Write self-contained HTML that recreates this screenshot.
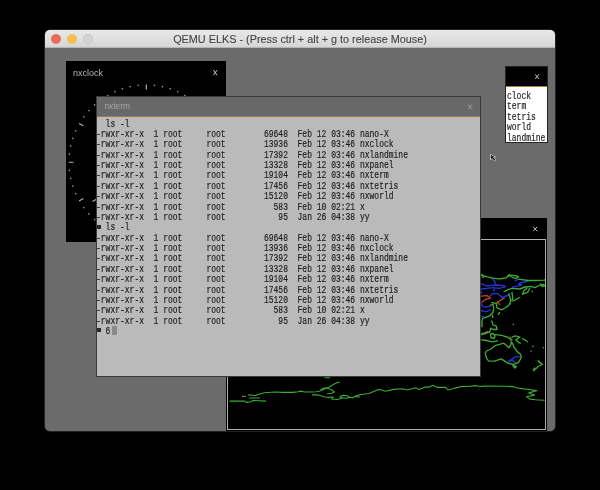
<!DOCTYPE html>
<html><head><meta charset="utf-8">
<style>
*{margin:0;padding:0;box-sizing:border-box}
html,body{will-change:transform;width:600px;height:490px;background:#000;overflow:hidden;position:relative;font-family:"Liberation Sans",sans-serif}
.abs{position:absolute}
#win{left:45px;top:30px;width:510px;height:401px;border-radius:5px;overflow:hidden;background:#6b6b6b;box-shadow:0 0 0 0.5px rgba(140,140,140,.5)}
#tb{left:0;top:0;width:510px;height:18px;background:linear-gradient(#e9e9e9,#d6d6d6);border-bottom:1px solid #b5b5b5}
#title{left:0;top:2.5px;width:510px;text-align:center;font-size:10.85px;color:#444;-webkit-text-stroke:0.1px #444;white-space:nowrap}
.dot{top:4px;width:10px;height:10px;border-radius:50%}
#clock{left:66px;top:61px;width:160px;height:181px;background:#000}
.ttl{font-size:9px;color:#c8c8c8;white-space:nowrap}
#term{left:96px;top:96px;width:385px;height:281px;background:#bababa;border:1px solid #3a3a3a;overflow:hidden}
#termtb{left:0;top:0;width:383px;height:20px;background:#686868;border-bottom:1px solid #a87a4a}
#txt{left:-1px;top:21.5px;font-family:"Liberation Mono",monospace;font-size:10.8px;line-height:10.38px;color:#1e1e1e;-webkit-text-stroke:0.2px #1e1e1e;white-space:pre;transform-origin:0 0;transform:scaleX(0.7407)}
#launch{left:505px;top:66px;width:43px;height:77px;background:#fff;border:1px solid #222}
#launchtb{left:0;top:0;width:41px;height:20px;background:#000;border-bottom:1px solid #a87a4a}
#ltxt{left:1px;top:24px;font-family:"Liberation Mono",monospace;font-size:10.8px;line-height:10.4px;color:#1e1e1e;-webkit-text-stroke:0.2px #1e1e1e;white-space:pre;transform-origin:0 0;transform:scaleX(0.7407)}
#map{left:226px;top:218px;width:321px;height:213px;background:#000}
#mapframe{left:227px;top:239px;width:319px;height:191px;border:1px solid #b0b0b0}
</style></head><body>
<div id="win" class="abs">
  <div id="tb" class="abs">
    <div class="abs dot" style="left:6px;background:#ed6a5e"></div>
    <div class="abs dot" style="left:22px;background:#f4bf4f"></div>
    <div class="abs dot" style="left:38px;background:#d2d2d2;box-shadow:inset 0 0 0 0.5px #c4c4c4"></div>
    <div id="title" class="abs">QEMU ELKS - (Press ctrl + alt + g to release Mouse)</div>
  </div>
</div>
<div id="clock" class="abs"></div>
<div class="abs ttl" style="left:73px;top:67.5px;color:#b4b4b4">nxclock</div>
<svg class="abs" style="left:0;top:0" width="600" height="490" viewBox="0 0 600 490"><path d="M213.3 70L217.1 75.3M217.1 70L213.3 75.3" stroke="#d0d0d0" stroke-width="0.9" fill="none"/><path d="M146.3 89.4L146.3 84.6M182.7 99.2L185.1 95.0M209.3 125.8L213.5 123.4M219.1 162.2L223.9 162.2M209.3 198.6L213.5 201.0M182.7 225.2L185.1 229.4M146.3 235.0L146.3 239.8M109.9 225.2L107.5 229.4M83.3 198.6L79.1 201.0M73.5 162.2L68.7 162.2M83.3 125.8L79.1 123.4M109.9 99.2L107.5 95.0" stroke="#b4b4b4" stroke-width="1.15" fill="none"/><g fill="#8c8c8c"><circle cx="154.4" cy="85.3" r="0.85"/><circle cx="162.4" cy="86.6" r="0.85"/><circle cx="170.2" cy="88.7" r="0.85"/><circle cx="177.7" cy="91.6" r="0.85"/><circle cx="191.7" cy="99.7" r="0.85"/><circle cx="198.0" cy="104.8" r="0.85"/><circle cx="203.7" cy="110.5" r="0.85"/><circle cx="208.8" cy="116.8" r="0.85"/><circle cx="216.9" cy="130.8" r="0.85"/><circle cx="219.8" cy="138.3" r="0.85"/><circle cx="221.9" cy="146.1" r="0.85"/><circle cx="223.2" cy="154.1" r="0.85"/><circle cx="223.2" cy="170.3" r="0.85"/><circle cx="221.9" cy="178.3" r="0.85"/><circle cx="219.8" cy="186.1" r="0.85"/><circle cx="216.9" cy="193.6" r="0.85"/><circle cx="208.8" cy="207.6" r="0.85"/><circle cx="203.7" cy="213.9" r="0.85"/><circle cx="198.0" cy="219.6" r="0.85"/><circle cx="191.7" cy="224.7" r="0.85"/><circle cx="177.7" cy="232.8" r="0.85"/><circle cx="170.2" cy="235.7" r="0.85"/><circle cx="162.4" cy="237.8" r="0.85"/><circle cx="154.4" cy="239.1" r="0.85"/><circle cx="138.2" cy="239.1" r="0.85"/><circle cx="130.2" cy="237.8" r="0.85"/><circle cx="122.4" cy="235.7" r="0.85"/><circle cx="114.9" cy="232.8" r="0.85"/><circle cx="100.9" cy="224.7" r="0.85"/><circle cx="94.6" cy="219.6" r="0.85"/><circle cx="88.9" cy="213.9" r="0.85"/><circle cx="83.8" cy="207.6" r="0.85"/><circle cx="75.7" cy="193.6" r="0.85"/><circle cx="72.8" cy="186.1" r="0.85"/><circle cx="70.7" cy="178.3" r="0.85"/><circle cx="69.4" cy="170.3" r="0.85"/><circle cx="69.4" cy="154.1" r="0.85"/><circle cx="70.7" cy="146.1" r="0.85"/><circle cx="72.8" cy="138.3" r="0.85"/><circle cx="75.7" cy="130.8" r="0.85"/><circle cx="83.8" cy="116.8" r="0.85"/><circle cx="88.9" cy="110.5" r="0.85"/><circle cx="94.6" cy="104.8" r="0.85"/><circle cx="100.9" cy="99.7" r="0.85"/><circle cx="114.9" cy="91.6" r="0.85"/><circle cx="122.4" cy="88.7" r="0.85"/><circle cx="130.2" cy="86.6" r="0.85"/><circle cx="138.2" cy="85.3" r="0.85"/></g><path d="M92.6 201.5L96.4 199.2" stroke="#b4b4b4" stroke-width="1.1"/></svg>
<div id="map" class="abs"></div>
<div id="mapframe" class="abs"></div>
<svg class="abs" style="left:0;top:0" width="600" height="490" viewBox="0 0 600 490"><path d="M533.2 226.8L537.2 231.2M537.2 226.8L533.2 231.2" stroke="#d0d0d0" stroke-width="0.9" fill="none"/></svg>
<svg class="abs" style="left:0;top:0" width="600" height="490" viewBox="0 0 600 490"><defs><clipPath id="mc"><rect x="228" y="240" width="317" height="189"/></clipPath></defs><g clip-path="url(#mc)" fill="none" stroke-linejoin="round" stroke-linecap="round"><polyline points="481.3,296.2 487.2,295.5 490.5,298.1 485.2,299.5 482,302.1" stroke="#b83e2c" stroke-width="1.35"/><polyline points="504.2,298.1 499.6,300.8 497,302.7" stroke="#b83e2c" stroke-width="1.35"/><polyline points="484.6,334 487.8,332.7" stroke="#b83e2c" stroke-width="1.35"/><polyline points="510,337.2 510.7,340.5" stroke="#b83e2c" stroke-width="1.35"/><polyline points="497.6,302 499.6,304.6" stroke="#b83e2c" stroke-width="1.35"/><polyline points="485.2,332.7 487.8,331.4" stroke="#b83e2c" stroke-width="1.35"/><polyline points="491.8,277.9 495,281.8 495,285" stroke="#2236d4" stroke-width="1.35"/><polyline points="481.3,283.8 485.9,285.7 489.8,285.7 496.3,285 504.2,285.7 505.5,286.7 499.6,288.3 493,287.7 486.5,288.3 481.3,289" stroke="#2236d4" stroke-width="1.35"/><polyline points="494.4,289 493.7,291" stroke="#2236d4" stroke-width="1.35"/><polyline points="481.3,291.6 482,292.9" stroke="#2236d4" stroke-width="1.35"/><polyline points="489.8,296.2 493,293.6 497.6,293.6 502.2,297.5 507.5,295.5 510,293.6" stroke="#2236d4" stroke-width="1.35"/><polyline points="515.3,280.5 518.5,279.2" stroke="#2236d4" stroke-width="1.35"/><polyline points="527,281.5 520.5,282.8 518.5,283.8 521.8,284.7 516.6,286.4 512.7,287" stroke="#2236d4" stroke-width="1.35"/><polyline points="481.3,303.3 482.6,306.6 486.5,307.2 490.5,305.9" stroke="#2236d4" stroke-width="1.35"/><polyline points="481.3,310.5 485.9,311.8 490.5,309.8" stroke="#2236d4" stroke-width="1.35"/><polyline points="481.3,316.4 485.9,317.4" stroke="#2236d4" stroke-width="1.35"/><polyline points="508.8,360.8 512,359.5 514.6,356.8 519.8,356.8" stroke="#2236d4" stroke-width="1.35"/><polyline points="508.3,362.3 511.7,360 516.3,363.4" stroke="#2236d4" stroke-width="1.35"/><polyline points="481.3,275.3 486.5,276.6 491.8,277.9 498.3,278.9 502.2,278.5 506.1,277.9 508.1,275.9 512,275.3 515.3,275.6 518.5,276.6 516,278.3 512.5,277.6" stroke="#3caa34" stroke-width="1.35"/><polyline points="482,274.5 484.5,276.5 482.5,277.5" stroke="#3caa34" stroke-width="1.35"/><polyline points="508,276.5 509.5,274.3 511,277" stroke="#3caa34" stroke-width="1.35"/><polyline points="518.5,279.2 528.3,280.5 535.5,280.5 544,280.2 545,280" stroke="#3caa34" stroke-width="1.35"/><polyline points="504.2,291.6 508.1,289.6 512,288.3 519.8,289 525,287 531,286.4 534.9,287.7 540.1,285 543.4,284.4 545,285.8 542,286.5 540.5,284" stroke="#3caa34" stroke-width="1.35"/><polyline points="529.6,288.3 527.7,292.3 522.5,294.2 523.8,291 527,288" stroke="#3caa34" stroke-width="1.35"/><polyline points="508.8,294.2 510.7,299.5 510,304" stroke="#3caa34" stroke-width="1.35"/><polyline points="512,292.3 512.7,298.1 512,300.8" stroke="#3caa34" stroke-width="1.35"/><polyline points="513.3,300.8 519.8,297.5" stroke="#3caa34" stroke-width="1.35"/><polyline points="496.3,303.3 497,307.9 501.6,309.8 505,308 508.1,305.9 510,303.3" stroke="#3caa34" stroke-width="1.35"/><polyline points="499.6,312.5 498.3,314.4" stroke="#3caa34" stroke-width="1.35"/><polyline points="491.8,302.7 496.3,303.4" stroke="#3caa34" stroke-width="1.35"/><polyline points="490.5,305.3 493,304 493.7,308.5 493,312.5 489.8,315.7 485.9,317.4 482.6,318.3 482,321.6 482,326.8" stroke="#3caa34" stroke-width="1.35"/><polyline points="492.4,315.1 492.7,317.7" stroke="#3caa34" stroke-width="1.35"/><polyline points="491.8,321 493,324.9 496.3,326.2 497,329.5 493,329.5 490.5,328.1 489.8,332 486.5,332.7 482,333.4" stroke="#3caa34" stroke-width="1.35"/><polyline points="481.3,334.6 485.2,333.3" stroke="#3caa34" stroke-width="1.35"/><polyline points="490.5,334 493,333.5 495,336 494,338.5 491,337.5 490.5,334" stroke="#3caa34" stroke-width="1.35"/><polyline points="495,334.6 501.6,335.3 507.5,337.2 512,339.8" stroke="#3caa34" stroke-width="1.35"/><polyline points="512,337.2 515.3,335.9 519.8,337.2 515.9,339.8 518.5,342.5 520.5,343.1" stroke="#3caa34" stroke-width="1.35"/><polyline points="522.5,338.5 527.7,341.8" stroke="#3caa34" stroke-width="1.35"/><polyline points="481.3,339.8 486.5,340.5 491.8,341.8 497.6,340.8" stroke="#3caa34" stroke-width="1.35"/><polyline points="510.7,345 508.8,347.7 506.1,345 503.5,343.1 499.6,344.4 495,345.7 491.1,349 486.5,351 485.2,353.6 486.5,358.1 488.5,360.8 494.7,361.1 500.9,358.8 504.9,361.1 508.3,363.4 514,364.5 518.5,362.3 520.5,359 521.2,356.8 520.5,354.2 517.2,351.6 514,347 512.7,343.8 511.4,341.8 510.7,345" stroke="#3caa34" stroke-width="1.35"/><polyline points="512.9,365.7 516.3,366.5 515,368 512.9,365.7" stroke="#3caa34" stroke-width="1.35"/><polyline points="538.1,360.8 540.8,363.4" stroke="#3caa34" stroke-width="1.35"/><polyline points="539,361.7 542.4,364.5 538,366.5 536.7,367.9 533.3,370.8 534.5,368" stroke="#3caa34" stroke-width="1.35"/><polyline points="229.9,401.1 244.3,401.1 246.8,402.4 250.5,401.75 253,400.5 265.5,401.1" stroke="#3caa34" stroke-width="1.1"/><polyline points="242.4,396.1 245.5,396.5" stroke="#3caa34" stroke-width="1.1"/><polyline points="248.6,394.9 255.5,395.5 258.6,394.25 264.3,392.75 275.5,392 283,392.4 293,392.4 298,391.75 300.5,391.1 305,392 310,392 316.7,391.8 320.8,390.75 325,388.7 329.2,387 333.3,384.5 336.7,382.8 339.2,382.4" stroke="#3caa34" stroke-width="1.1"/><polyline points="249.3,398 259.3,398" stroke="#3caa34" stroke-width="1.1"/><polyline points="320.8,389.5 325,387.8 329.2,388.7 332.5,390.3 334.2,392 331.7,393.25 327.5,393.7" stroke="#3caa34" stroke-width="1.1"/><polyline points="312.5,394.9 318.3,394.9 325,397 328.3,397.4 333.3,397 331.7,399 337.5,399.5 341.7,398.25 340,396.6 343.3,395.3 347.5,395.75 349.2,397.4 346.7,398.25 341.7,397.8" stroke="#3caa34" stroke-width="1.1"/><polyline points="349.2,397.4 353,397.6 357.7,395.3 360,394.7" stroke="#3caa34" stroke-width="1.1"/><polyline points="355,396.4 359.7,397" stroke="#3caa34" stroke-width="1.1"/><polyline points="359.7,394.7 369,393.5 378.3,389.4 381.8,390 385.3,391.2 393.5,389.4 401.7,388.8 407.5,390 415.7,387.7 419.2,389.4 425,387.1 429.3,387.1 432.8,385.3 437.5,387.4 445.7,387.4 448,390 452.7,388.8 457.3,387.4 462,386.5 469,386.5 474.8,385.6 480.7,386.5 484.5,386.1 504.9,386.3 512.9,386.6 516.3,387.8 523.1,388.9 529.9,389.5 536.7,390.6 528.8,392.9 534.4,395.1 526.5,396.8 529.9,399.1 535.6,399.7 544.1,400.2" stroke="#3caa34" stroke-width="1.1"/><polyline points="325,377.8 329.7,377.8" stroke="#3caa34" stroke-width="1.1"/><circle cx="532.9" cy="346.4" r="0.8" fill="#3caa34" stroke="none"/><circle cx="531" cy="351" r="0.8" fill="#3caa34" stroke="none"/><circle cx="543.4" cy="347.7" r="0.8" fill="#3caa34" stroke="none"/><circle cx="513.3" cy="324.5" r="0.8" fill="#3caa34" stroke="none"/><circle cx="532.3" cy="291.6" r="0.8" fill="#3caa34" stroke="none"/></g></svg>
<div id="launch" class="abs">
  <div id="launchtb" class="abs"></div>
  <div id="ltxt" class="abs">clock
term
tetris
world
landmine</div>
</div>
<svg class="abs" style="left:0;top:0" width="600" height="490" viewBox="0 0 600 490"><path d="M535.2 74.3L539 79M539 74.3L535.2 79" stroke="#d0d0d0" stroke-width="0.9" fill="none"/></svg>
<div id="term" class="abs">
  <div id="termtb" class="abs"></div>
  <div class="abs ttl" style="left:7.5px;top:4px;color:#a8a8a8;font-size:8.3px">nxterm</div>
  <div id="txt" class="abs">  ls -l
-rwxr-xr-x  1 root     root        69648  Feb 12 03:46 nano-X
-rwxr-xr-x  1 root     root        13936  Feb 12 03:46 nxclock
-rwxr-xr-x  1 root     root        17392  Feb 12 03:46 nxlandmine
-rwxr-xr-x  1 root     root        13328  Feb 12 03:46 nxpanel
-rwxr-xr-x  1 root     root        19104  Feb 12 03:46 nxterm
-rwxr-xr-x  1 root     root        17456  Feb 12 03:46 nxtetris
-rwxr-xr-x  1 root     root        15120  Feb 12 03:46 nxworld
-rwxr-xr-x  1 root     root          583  Feb 10 02:21 x
-rwxr-xr-x  1 root     root           95  Jan 26 04:38 yy
  ls -l
-rwxr-xr-x  1 root     root        69648  Feb 12 03:46 nano-X
-rwxr-xr-x  1 root     root        13936  Feb 12 03:46 nxclock
-rwxr-xr-x  1 root     root        17392  Feb 12 03:46 nxlandmine
-rwxr-xr-x  1 root     root        13328  Feb 12 03:46 nxpanel
-rwxr-xr-x  1 root     root        19104  Feb 12 03:46 nxterm
-rwxr-xr-x  1 root     root        17456  Feb 12 03:46 nxtetris
-rwxr-xr-x  1 root     root        15120  Feb 12 03:46 nxworld
-rwxr-xr-x  1 root     root          583  Feb 10 02:21 x
-rwxr-xr-x  1 root     root           95  Jan 26 04:38 yy
  6</div>
  <div class="abs" style="left:0;top:127.5px;width:4px;height:4px;background:#2a2a2a"></div>
  <div class="abs" style="left:0;top:231px;width:4px;height:4px;background:#2a2a2a"></div>
  <div class="abs" style="left:15px;top:229px;width:5px;height:9px;background:#8a8a8a"></div>
</div>
<svg class="abs" style="left:0;top:0" width="600" height="490" viewBox="0 0 600 490"><path d="M468.2 104.5L472 109.4M472 104.5L468.2 109.4" stroke="#a0a0a0" stroke-width="0.9" fill="none"/>
<path d="M490.5 154.5L490.5 160L492 158.5L494.5 161L496 160L493.5 157.5L495.5 157Z" fill="#111" stroke="#ddd" stroke-width="0.7"/></svg>
</body></html>
